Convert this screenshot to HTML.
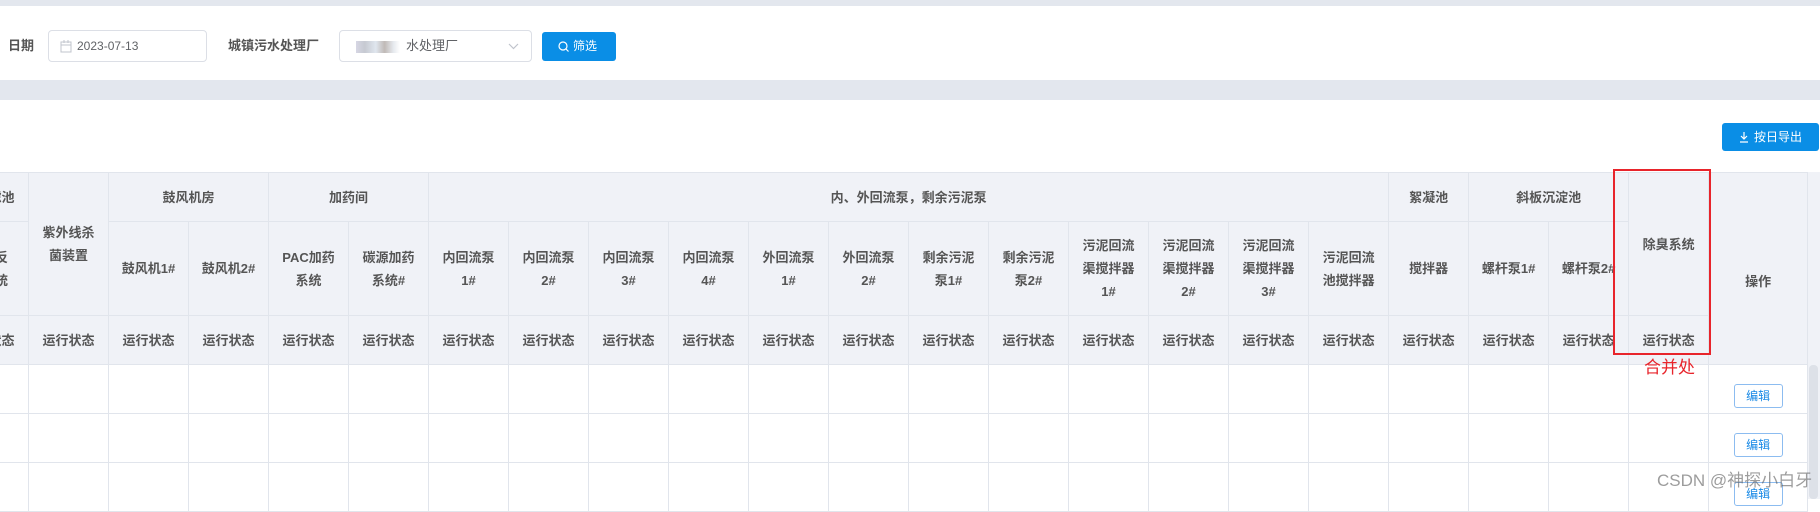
<!DOCTYPE html>
<html><head><meta charset="utf-8">
<style>
*{box-sizing:border-box;margin:0;padding:0}
body{width:1820px;height:499px;overflow:hidden;background:#fff;font-family:"Liberation Sans","Noto Sans CJK SC",sans-serif;position:relative;color:#555}
.abs{position:absolute}
table{position:absolute;left:-52px;top:172px;border-collapse:collapse;table-layout:fixed;width:1859px}
td,th{border:1px solid #e1e5ec;text-align:center;vertical-align:middle;font-size:13px;line-height:23px;color:#555;overflow:hidden;white-space:nowrap}
th{background:#f0f2f7;font-weight:bold}
.edit{display:inline-block;width:49px;height:24px;border:1px solid #8cbcf0;border-radius:3px;color:#1a8ae6;font-size:12px;line-height:22px;background:#fff}
</style></head><body>
<div class="abs" style="left:0;top:0;width:1820px;height:6px;background:#e3e7ee"></div>
<div class="abs" style="left:8px;top:36px;font-size:13px;font-weight:bold;line-height:20px;color:#555">日期</div>
<div class="abs" style="left:48px;top:30px;width:159px;height:32px;border:1px solid #dcdfe6;border-radius:4px">
 <svg class="abs" style="left:11px;top:9px" width="12" height="13" viewBox="0 0 12 13"><rect x="1" y="2" width="10" height="10" fill="none" stroke="#c0c4cc"/><line x1="1" y1="5" x2="11" y2="5" stroke="#c0c4cc"/><line x1="4" y1="0" x2="4" y2="3" stroke="#c0c4cc"/><line x1="8" y1="0" x2="8" y2="3" stroke="#c0c4cc"/></svg>
 <span class="abs" style="left:28px;top:6px;font-size:12px;color:#606266;line-height:18px">2023-07-13</span>
</div>
<div class="abs" style="left:228px;top:36px;font-size:13px;font-weight:bold;line-height:20px;color:#555">城镇污水处理厂</div>
<div class="abs" style="left:339px;top:30px;width:193px;height:32px;border:1px solid #dcdfe6;border-radius:4px">
 <span class="abs" style="left:16px;top:10px;width:44px;height:12px;background:linear-gradient(90deg,#ccd 0,#b8bcc6 20%,#d8e0ea 45%,#b0a8a4 65%,#e0e4ea 85%,#fff);opacity:.8"></span>
 <span class="abs" style="left:66px;top:6px;font-size:13px;color:#606266;line-height:18px">水处理厂</span>
 <svg class="abs" style="left:168px;top:12px" width="11" height="7" viewBox="0 0 11 7"><path d="M1 1l4.5 4.5L10 1" fill="none" stroke="#c0c4cc" stroke-width="1.2"/></svg>
</div>
<div class="abs" style="left:542px;top:32px;width:74px;height:29px;background:#0a8ee6;border-radius:3px;color:#fff;font-size:12px;line-height:29px">
 <svg class="abs" style="left:16px;top:9px" width="11" height="11" viewBox="0 0 11 11"><circle cx="5" cy="5" r="4" fill="none" stroke="#fff" stroke-width="1.2"/><line x1="8" y1="8" x2="10.5" y2="10.5" stroke="#fff" stroke-width="1.2"/></svg>
 <span class="abs" style="left:31px;top:0">筛选</span>
</div>
<div class="abs" style="left:0;top:80px;width:1820px;height:20px;background:#e3e7ee"></div>
<div class="abs" style="left:1722px;top:123px;width:97px;height:28px;background:#0a8ee6;border-radius:3px;color:#fff;font-size:12px;line-height:28px">
 <svg class="abs" style="left:17px;top:8px" width="10" height="12" viewBox="0 0 10 12"><path d="M5 1v7M2 5l3 3 3-3M1 11h8" fill="none" stroke="#fff" stroke-width="1.2"/></svg>
 <span class="abs" style="left:32px;top:0">按日导出</span>
</div>
<table>
<colgroup><col style="width:80px"><col span="20" style="width:80px"><col style="width:80px"><col style="width:99px"></colgroup>
<tr style="height:49px"><th>深床滤池</th><th rowspan="2">紫外线杀<br>菌装置</th><th colspan="2">鼓风机房</th><th colspan="2">加药间</th><th colspan="12">内、外回流泵，剩余污泥泵</th><th>絮凝池</th><th colspan="2">斜板沉淀池</th><th rowspan="2">除臭系统</th><th rowspan="3" style="padding-top:26px">操作</th></tr>
<tr style="height:94px"><th>滤池反<br>冲系统</th><th>鼓风机1#</th><th>鼓风机2#</th><th>PAC加药<br>系统</th><th>碳源加药<br>系统#</th><th>内回流泵<br>1#</th><th>内回流泵<br>2#</th><th>内回流泵<br>3#</th><th>内回流泵<br>4#</th><th>外回流泵<br>1#</th><th>外回流泵<br>2#</th><th>剩余污泥<br>泵1#</th><th>剩余污泥<br>泵2#</th><th>污泥回流<br>渠搅拌器<br>1#</th><th>污泥回流<br>渠搅拌器<br>2#</th><th>污泥回流<br>渠搅拌器<br>3#</th><th>污泥回流<br>池搅拌器</th><th>搅拌器</th><th>螺杆泵1#</th><th>螺杆泵2#</th></tr>
<tr style="height:49px"><th>运行状态</th><th>运行状态</th><th>运行状态</th><th>运行状态</th><th>运行状态</th><th>运行状态</th><th>运行状态</th><th>运行状态</th><th>运行状态</th><th>运行状态</th><th>运行状态</th><th>运行状态</th><th>运行状态</th><th>运行状态</th><th>运行状态</th><th>运行状态</th><th>运行状态</th><th>运行状态</th><th>运行状态</th><th>运行状态</th><th>运行状态</th><th>运行状态</th></tr>
<tr style="height:49px"><td></td><td></td><td></td><td></td><td></td><td></td><td></td><td></td><td></td><td></td><td></td><td></td><td></td><td></td><td></td><td></td><td></td><td></td><td></td><td></td><td></td><td></td><td style="padding-top:14px"><span class="edit">编辑</span></td></tr>
<tr style="height:49px"><td></td><td></td><td></td><td></td><td></td><td></td><td></td><td></td><td></td><td></td><td></td><td></td><td></td><td></td><td></td><td></td><td></td><td></td><td></td><td></td><td></td><td></td><td style="padding-top:14px"><span class="edit">编辑</span></td></tr>
<tr style="height:49px"><td></td><td></td><td></td><td></td><td></td><td></td><td></td><td></td><td></td><td></td><td></td><td></td><td></td><td></td><td></td><td></td><td></td><td></td><td></td><td></td><td></td><td></td><td style="padding-top:14px"><span class="edit">编辑</span></td></tr>
</table>
<div class="abs" style="left:1808px;top:172px;width:12px;height:327px;background:#f0f2f7"></div>
<div class="abs" style="left:1809px;top:365px;width:9px;height:134px;background:#dde1e8;border-radius:4px"></div>
<div class="abs" style="left:1613px;top:169px;width:98px;height:186px;border:2px solid #e8242b"></div>
<div class="abs" style="left:1644px;top:357px;font-size:17px;line-height:22px;color:#e8242b">合并处</div>
<div class="abs" style="left:1657px;top:470px;font-size:17px;line-height:22px;color:rgba(90,90,90,.6)">CSDN @神探小白牙</div>
</body></html>
